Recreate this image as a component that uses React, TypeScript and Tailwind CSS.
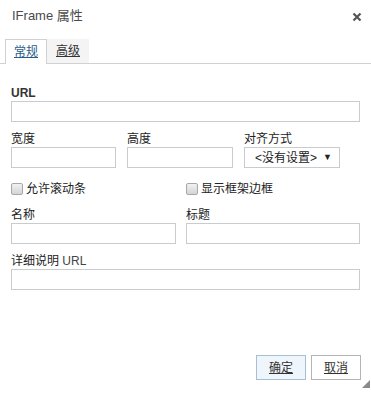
import React from 'react';

const font = "font-['Liberation_Sans','Noto_Sans_CJK_SC',sans-serif]";

const Field = ({ label, className }: { label: React.ReactNode; className: string }) => (
  <div className={className}>
    <div className="h-[15px] text-[12px] leading-[15px] text-[#222]">{label}</div>
    <div className="h-[21px] border border-[#c9cccf] bg-white" />
  </div>
);

const Check = ({ label }: { label: string }) => (
  <label className="flex h-[14px] items-center gap-[3px] text-[12px] leading-[14px] text-[#222]">
    <span className="h-[12px] w-[12px] rounded-[2px] border border-[#a8a8a8] bg-gradient-to-b from-[#f2f2f2] to-[#d4d4d4]" />
    {label}
  </label>
);

export default function App() {
  return (
    <div className={`relative flex h-[393px] w-[371px] flex-col bg-white ${font}`}>
      <div className="flex h-[39px] items-start justify-between pl-[12px] pr-[9px] pt-[8px]">
        <span className="text-[13px] leading-[16px] text-[#4a4a4a]">IFrame 属性</span>
        <svg width="10" height="10" viewBox="0 0 10 10" className="mt-[4px]">
          <path d="M1.5 1.5 L8.5 8.5 M8.5 1.5 L1.5 8.5" stroke="#555" strokeWidth="2.2" />
        </svg>
      </div>

      <div className="flex h-[25px] items-end border-b border-[#d1d1d1] pl-[5px]">
        <div className="-mb-px flex h-[25px] w-[42px] items-center justify-center border border-b-0 border-[#d1d1d1] bg-white text-[12px] text-[#2a5b8a] underline">
          常规
        </div>
        <div className="flex h-[24px] w-[42px] items-center justify-center bg-[#f4f4f4] text-[12px] text-[#333] underline">
          高级
        </div>
      </div>

      <div className="flex flex-col px-[11px] pt-[22px]">
        <div>
          <div className="h-[15px] text-[12px] font-bold leading-[15px] text-[#333]">URL</div>
          <div className="h-[21px] w-[349px] border border-[#c9cccf]" />
        </div>

        <div className="mt-[10px] flex gap-[11px]">
          <Field label="宽度" className="w-[105px]" />
          <Field label="高度" className="w-[106px]" />
          <div className="w-[96px]">
            <div className="h-[15px] pl-[-1px] text-[12px] leading-[15px] text-[#222]">对齐方式</div>
            <div className="flex h-[21px] items-center border border-[#c9cccf] pl-[10px] pr-[7px] text-[12px] text-[#222]">
              <span className="flex-1">&lt;没有设置&gt;</span>
              <span className="text-[9px]">▼</span>
            </div>
          </div>
        </div>

        <div className="mt-[14px] flex">
          <div className="w-[175px]">
            <Check label="允许滚动条" />
          </div>
          <Check label="显示框架边框" />
        </div>

        <div className="mt-[12px] flex gap-[10px]">
          <Field label="名称" className="w-[165px]" />
          <Field label="标题" className="w-[174px]" />
        </div>

        <Field
          label={
            <>
              详细说明 <span className="text-[#444]">URL</span>
            </>
          }
          className="mt-[10px] w-[349px]"
        />
      </div>

      <div className="flex-1" />

      <div className="flex justify-end gap-[5px] pb-[13px] pr-[10px]">
        <button className="h-[25px] w-[50px] border border-[#a6bfd6] bg-[#eef5fb] text-[12px] text-[#333] underline">
          确定
        </button>
        <button className="h-[25px] w-[50px] border border-[#b5b5b5] bg-white text-[12px] text-[#333] underline">
          取消
        </button>
      </div>

      <svg width="8" height="8" viewBox="0 0 8 8" className="absolute bottom-[5px] right-[1px]">
        <path d="M8 0 L8 8 L0 8 Z" fill="#8a8a8a" />
      </svg>
    </div>
  );
}
